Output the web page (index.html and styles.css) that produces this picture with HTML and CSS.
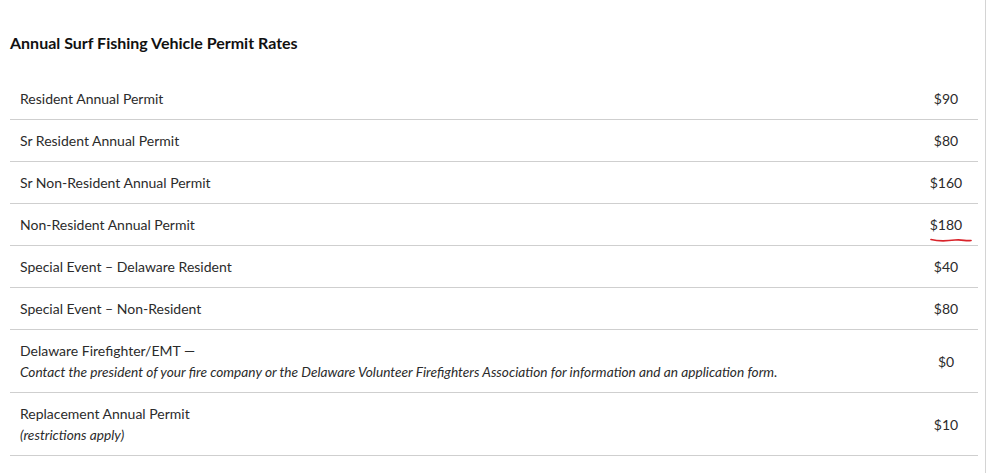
FILE: index.html
```html
<!DOCTYPE html>
<html>
<head><link rel="stylesheet" href="styles.css"></head>
<body>
<div class="page">
  <h2 class="title">Annual Surf Fishing Vehicle Permit Rates</h2>
  <table class="rates">
    <tr><td class="name">Resident Annual Permit</td><td class="price">$90</td></tr>
    <tr><td class="name">Sr Resident Annual Permit</td><td class="price">$80</td></tr>
    <tr><td class="name">Sr Non-Resident Annual Permit</td><td class="price">$160</td></tr>
    <tr><td class="name">Non-Resident Annual Permit</td><td class="price"><span class="marked">$180<svg class="scribble" width="44" height="8" viewBox="0 0 44 8"><path d="M2 3.5 C10 5.5, 18 5, 26 4 S36 5.5, 42 4.5" fill="none" stroke="#d9232a" stroke-width="1.7" stroke-linecap="round"/></svg></span></td></tr>
    <tr><td class="name">Special Event – Delaware Resident</td><td class="price">$40</td></tr>
    <tr><td class="name">Special Event – Non-Resident</td><td class="price">$80</td></tr>
    <tr><td class="name">Delaware Firefighter/EMT —<br><em>Contact the president of your fire company or the Delaware Volunteer Firefighters Association for information and an application form.</em></td><td class="price">$0</td></tr>
    <tr><td class="name">Replacement Annual Permit<br><em>(restrictions apply)</em></td><td class="price">$10</td></tr>
  </table>
</div>
</body>
</html>
```
FILE: styles.css
```css
html, body { margin: 0; padding: 0; background: #fff; }
body { font-family: Lato, "Open Sans", sans-serif; color: #2b2b2b; }
.page {
  width: 986px;
  height: 473px;
  box-sizing: border-box;
  border-right: 1px solid #d4d4d4;
  padding: 30px 8px 0 10px;
}
.title {
  margin: 0 0 22px 0;
  font-size: 16px;
  font-weight: 700;
  color: #111;
  line-height: 26px;
}
.rates {
  width: 968px;
  border-collapse: collapse;
  font-size: 14px;
}
.rates td {
  border-bottom: 1px solid #cfcfcf;
  padding: 10px 10px 10px;
  line-height: 21px;
  vertical-align: middle;
}
.rates em { font-size: 13.7px; }
.price { width: 44px; text-align: center; }
.marked { position: relative; display: inline-block; }
.scribble { position: absolute; left: -1px; top: 22px; }
```
